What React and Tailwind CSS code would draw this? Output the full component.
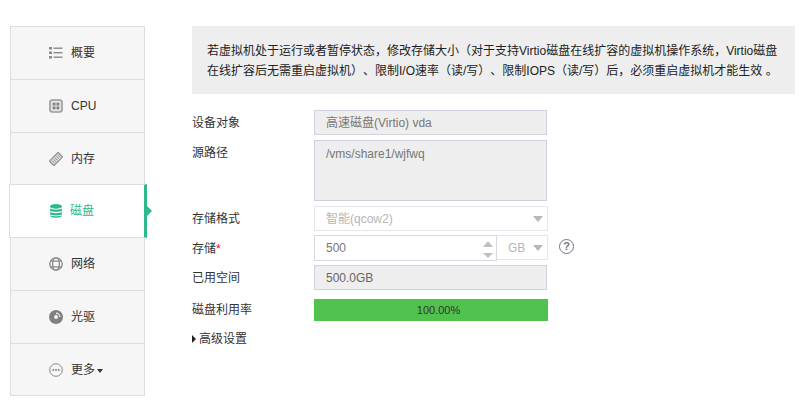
// App.jsx
import React from 'react';

const FONT = "font-['Liberation_Sans','Noto_Sans_CJK_SC',sans-serif]";

const ListIcon = () => (
  <svg width="14" height="14" viewBox="0 0 14 14" fill="#8a8a8a">
    <rect x="0" y="1" width="3" height="2.5" />
    <rect x="0" y="5.5" width="3" height="2.5" />
    <rect x="0" y="10" width="3" height="2.5" />
    <rect x="4.5" y="1.5" width="9" height="1.4" />
    <rect x="4.5" y="6" width="9" height="1.4" />
    <rect x="4.5" y="10.5" width="9" height="1.4" />
  </svg>
);

const CpuIcon = () => (
  <svg width="14" height="14" viewBox="0 0 14 14">
    <rect x="1" y="1" width="12" height="12" rx="2.5" fill="#e6e6e6" stroke="#9a9a9a" strokeWidth="1.6" />
    <g fill="#808080">
      <rect x="3.7" y="3.7" width="2.8" height="2.8" />
      <rect x="7.5" y="3.7" width="2.8" height="2.8" />
      <rect x="3.7" y="7.5" width="2.8" height="2.8" />
      <rect x="7.5" y="7.5" width="2.8" height="2.8" />
    </g>
  </svg>
);

const MemoryIcon = () => (
  <svg width="14" height="14" viewBox="0 0 14 14">
    <g transform="rotate(-45 7 7)">
      <rect x="0.8" y="3.8" width="12.4" height="6.4" fill="#dcdcdc" stroke="#8a8a8a" strokeWidth="1.1" />
      <path d="M3 5.2v3.600M5 5.2v3.600M7 5.2v3.600M9 5.2v3.600M11 5.2v3.600" stroke="#8a8a8a" strokeWidth="0.9" />
    </g>
  </svg>
);

const DiskIcon = () => (
  <svg width="14" height="14" viewBox="0 0 14 14" fill="#2db88d">
    <ellipse cx="7" cy="2.4" rx="6" ry="2.4" />
    <path d="M1 4.6c1.5 1.5 10.500 1.500 12 0v2.200c-1.500 1.500-10.500 1.500-12 0z" />
    <path d="M1 8.100c1.500 1.500 10.500 1.500 12 0v2.200c-1.500 1.500-10.500 1.500-12 0z" />
    <path d="M1 11.300c1.500 1.300 10.500 1.300 12 0v0.400c-1.500 2.800-10.500 2.800-12 0z" />
  </svg>
);

const GlobeIcon = () => (
  <svg width="14" height="14" viewBox="0 0 14 14" fill="none" stroke="#8a8a8a" strokeWidth="1.3">
    <circle cx="7" cy="7" r="6.200" />
    <ellipse cx="7" cy="7" rx="3.400" ry="6.200" />
    <path d="M1 4.200h12M1 9.800h12" />
  </svg>
);

const DiscIcon = () => (
  <svg width="14" height="14" viewBox="0 0 14 14">
    <circle cx="7" cy="7" r="7" fill="#808080" />
    <path d="M7 3.200A3.800 3.800 0 0 1 10.800 7" fill="none" stroke="#f6f6f6" strokeWidth="1.200" />
    <circle cx="7" cy="7" r="1.900" fill="#f6f6f6" />
  </svg>
);

const MoreIcon = () => (
  <svg width="14" height="14" viewBox="0 0 14 14">
    <circle cx="7" cy="7" r="6.300" fill="none" stroke="#8a8a8a" strokeWidth="1" />
    <g fill="#777">
      <rect x="3.500" y="6.200" width="1.600" height="1.600" />
      <rect x="6.200" y="6.200" width="1.600" height="1.600" />
      <rect x="8.900" y="6.200" width="1.600" height="1.600" />
    </g>
  </svg>
);

const navItems = [
  { label: '概要', icon: <ListIcon /> },
  { label: 'CPU', icon: <CpuIcon /> },
  { label: '内存', icon: <MemoryIcon /> },
  { label: '磁盘', icon: <DiskIcon />, active: true },
  { label: '网络', icon: <GlobeIcon /> },
  { label: '光驱', icon: <DiscIcon /> },
  { label: '更多', icon: <MoreIcon />, caret: true },
];

const NavRow = ({ item }) => {
  if (item.active) {
    return (
      <div className="relative -mb-px -ml-[2px] -mr-[3px] -mt-px flex h-[54px] items-center border-t border-b border-l border-[#dddddd] border-r-[3px] border-r-[#2db88d] bg-white pl-[39px] text-[#2db88d]">
        {item.icon}
        <span className="ml-[7px]">{item.label}</span>
        <span className="absolute -right-[8px] top-[21px] border-y-[5px] border-l-[5px] border-y-transparent border-l-[#2db88d]" />
      </div>
    );
  }
  return (
    <div className="flex h-[53px] items-center border-t border-[#dddddd] pl-[38px] text-[#333333] last:border-b">
      {item.icon}
      <span className="ml-[8px]">{item.label}</span>
      {item.caret && (
        <span className="ml-[2px] mt-[2px] border-x-[3.500px] border-t-[4px] border-x-transparent border-t-[#333333]" />
      )}
    </div>
  );
};

const Label = ({ children, className = '' }) => (
  <div className={`w-[122px] shrink-0 text-[#333333] ${className}`}>{children}</div>
);

const Caret = () => (
  <span className="border-x-[5px] border-t-[6px] border-x-transparent border-t-[#b8b8b8]" />
);

const App = () => {
  return (
    <div className={`flex h-[418px] w-[810px] overflow-hidden bg-white pt-[26px] text-[12px] ${FONT}`}>
      <div className="ml-[10px] h-[370px] w-[135px] shrink-0 border-x border-[#dddddd] bg-[#f6f6f6]">
        {navItems.map((item) => (
          <NavRow key={item.label} item={item} />
        ))}
      </div>

      <div className="ml-[47px] w-[603px]">
        <div className="h-[68px] bg-[#eeeeee] pl-[15px] pr-[10px] pt-[15px] leading-[20px] text-[#222222] [text-spacing-trim:space-all]">
          <div className="whitespace-nowrap">若虚拟机处于运行或者暂停状态，修改存储大小（对于支持Virtio磁盘在线扩容的虚拟机操作系统，Virtio磁盘</div>
          <div className="whitespace-nowrap">在线扩容后无需重启虚拟机）、限制I/O速率（读/写）、限制IOPS（读/写）后，必须重启虚拟机才能生效 。</div>
        </div>

        <div className="mt-[16px] flex h-[25px] items-center">
          <Label>设备对象</Label>
          <div className="flex h-[25px] w-[233px] items-center border border-[#d2d0e0] bg-[#eeeeee] pl-[11px] text-[#777777]">高速磁盘(Virtio) vda</div>
        </div>

        <div className="mt-[5px] flex h-[61px]">
          <Label className="pt-[4px]">源路径</Label>
          <div className="h-[61px] w-[233px] border border-[#d2d0e0] bg-[#eeeeee] pl-[11px] pt-[4px] text-[#777777]">/vms/share1/wjfwq</div>
        </div>

        <div className="mt-[5px] flex h-[25px] items-center">
          <Label>存储格式</Label>
          <div className="flex h-[25px] w-[234px] items-center justify-between border border-[#e6e6ee] bg-white pl-[11px] pr-[4px] text-[#b5b5b5]">
            <span>智能(qcow2)</span>
            <Caret />
          </div>
        </div>

        <div className="mt-[4px] flex h-[26px] items-start">
          <Label className="pt-[5px]">存储<span className="text-[#ff0000]">*</span></Label>
          <div className="flex h-[26px] w-[183px] items-center justify-between border border-[#d8d8e4] bg-white pl-[11px] pr-[3px] text-[#777777]">
            <span>500</span>
            <div className="mt-[3px] flex flex-col gap-[6px]">
              <span className="border-x-[5px] border-b-[6px] border-x-transparent border-b-[#c0c0c0]" />
              <span className="border-x-[5px] border-t-[5px] border-x-transparent border-t-[#c0c0c0]" />
            </div>
          </div>
          <div className="flex h-[25px] w-[51px] items-center justify-between border border-l-0 border-[#e6e6ee] bg-white pl-[11px] pr-[4px] text-[#b5b5b5]">
            <span>GB</span>
            <Caret />
          </div>
          <div className="ml-[11px] mt-[4px] flex h-[15px] w-[15px] items-center justify-center rounded-full border-[1.500px] border-[#6f7780] text-[11px] font-bold leading-none text-[#6f7780]">?</div>
        </div>

        <div className="mt-[4px] flex h-[25px] items-center">
          <Label>已用空间</Label>
          <div className="flex h-[25px] w-[233px] items-center border border-[#d2d0e0] bg-[#eeeeee] pl-[11px] text-[#666666]">500.0GB</div>
        </div>

        <div className="mt-[9px] flex h-[22px] items-center">
          <Label>磁盘利用率</Label>
          <div className="flex h-[22px] w-[234px] items-center justify-center bg-[#50c24d] pl-[15px] text-[11px] text-[#333333]">100.00%</div>
        </div>

        <div className="mt-[8px] flex h-[20px] items-center text-[#333333]">
          <span className="mr-[3px] border-y-[4px] border-l-[4px] border-y-transparent border-l-[#222222]" />
          高级设置
        </div>
      </div>
    </div>
  );
};

export default App;
